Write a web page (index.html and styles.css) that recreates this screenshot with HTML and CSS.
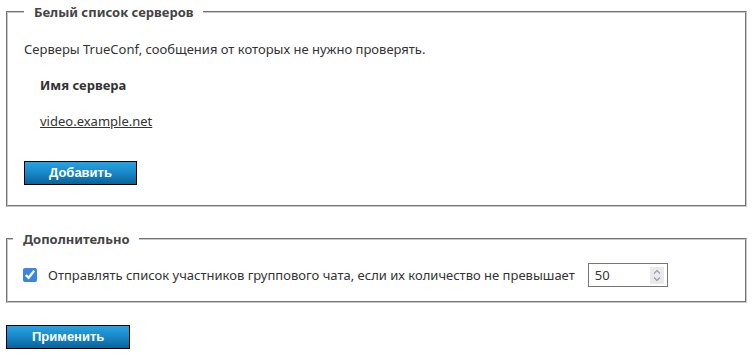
FILE: index.html
```html
<!DOCTYPE html>
<html lang="ru">
<head>
<meta charset="utf-8">
<title>Белый список серверов</title>
<link rel="stylesheet" href="styles.css">
</head>
<body>
<form class="page">
  <fieldset class="group group-whitelist">
    <legend class="group-title">Белый список серверов</legend>
    <p class="desc">Серверы TrueConf, сообщения от которых не нужно проверять.</p>
    <div class="list">
      <div class="list-head">Имя сервера</div>
      <div class="list-row"><a class="server-link" href="#">video.example.net</a></div>
    </div>
    <button type="button" class="btn">Добавить</button>
  </fieldset>

  <fieldset class="group group-extra">
    <legend class="group-title group-title-tight">Дополнительно</legend>
    <div class="option-row">
      <input type="checkbox" class="check" id="send" checked>
      <label for="send" class="option-label">Отправлять список участников группового чата, если их количество не превышает</label>
      <span class="num-wrap">
        <input type="number" class="num" value="50">
        <span class="spin" aria-hidden="true">
          <svg width="14" height="17" viewBox="0 0 14 17">
            <path d="M4 6.5 L7 3.5 L10 6.5" fill="none" stroke="#9a9aa0" stroke-width="1.1"/>
            <path d="M4 10.5 L7 13.5 L10 10.5" fill="none" stroke="#9a9aa0" stroke-width="1.1"/>
          </svg>
        </span>
      </span>
    </div>
  </fieldset>

  <button type="button" class="btn btn-apply">Применить</button>
</form>
</body>
</html>
```
FILE: styles.css
```css
html, body {
  margin: 0;
  padding: 0;
  background: #fff;
}
body {
  font-family: "Noto Sans", "Open Sans", sans-serif;
  font-size: 13px;
  line-height: 18px;
  color: #333;
}
.page {
  display: flex;
  flex-direction: column;
  align-items: flex-start;
  padding: 3px 6px 0 6px;
}
.group {
  align-self: stretch;
  margin: 0;
  border: 2px groove #c8c8c8;
  min-width: 0;
}
.group-whitelist {
  padding: 0 15px 20px 16px;
}
.group-extra {
  margin-top: 23px;
  padding: 0 15px 14px 15px;
}
.group-title {
  font-weight: 700;
  color: #444;
  padding: 0 10px;
  line-height: 18px;
}
.group-title-tight {
  margin-left: -10px;
}
.desc {
  margin: 19px 0 0;
}
.list {
  padding-left: 16px;
}
.list-head {
  margin-top: 18px;
  font-weight: 700;
  color: #333;
}
.list-row {
  margin-top: 18px;
}
.server-link {
  color: #333;
  text-decoration: underline;
}
.btn {
  display: block;
  margin-top: 31px;
  height: 24px;
  padding: 0 24px;
  border: 1px solid #000;
  background: linear-gradient(to bottom, #2ba3e0 0%, #1887c7 50%, #0a6299 100%);
  color: #fff;
  font-family: "Liberation Sans", Arial, sans-serif;
  font-weight: 700;
  font-size: 13px;
  line-height: 22px;
  cursor: pointer;
}
.btn-apply {
  margin-top: 22px;
  padding: 0 25px;
}
.option-row {
  display: flex;
  align-items: center;
  margin-top: 15px;
}
.check {
  margin: 0;
  width: 14px;
  height: 14px;
  accent-color: #3a85e0;
  flex: none;
}
.option-label {
  margin-left: 11px;
  color: #333;
}
.num-wrap {
  position: relative;
  display: block;
  margin-left: 13px;
  width: 80px;
  height: 24px;
  flex: none;
}
.num {
  display: block;
  width: 80px;
  height: 24px;
  margin: 0;
  box-sizing: border-box;
  border: 1px solid #767676;
  padding: 0 20px 0 6px;
  font-family: "Noto Sans", "Open Sans", sans-serif;
  font-size: 13px;
  color: #333;
  -moz-appearance: textfield;
}
.num::-webkit-inner-spin-button,
.num::-webkit-outer-spin-button {
  -webkit-appearance: none;
  margin: 0;
}
.spin {
  position: absolute;
  top: 4px;
  right: 4px;
  width: 14px;
  height: 17px;
  background: #e9e9ee;
  pointer-events: none;
}
.spin svg {
  display: block;
}
```
